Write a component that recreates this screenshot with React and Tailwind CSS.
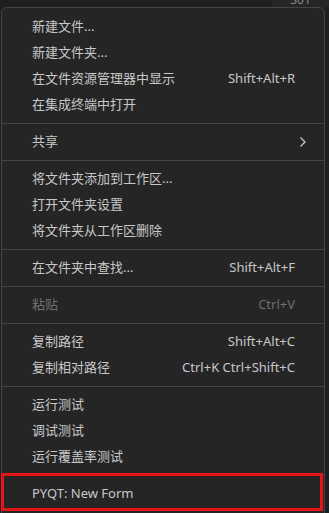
const groups = [
  [
    { label: "新建文件..." },
    { label: "新建文件夹..." },
    { label: "在文件资源管理器中显示", keys: "Shift+Alt+R" },
    { label: "在集成终端中打开" },
  ],
  [{ label: "共享", submenu: true }],
  [
    { label: "将文件夹添加到工作区..." },
    { label: "打开文件夹设置" },
    { label: "将文件夹从工作区删除" },
  ],
  [{ label: "在文件夹中查找...", keys: "Shift+Alt+F" }],
  [{ label: "粘贴", keys: "Ctrl+V", disabled: true }],
  [
    { label: "复制路径", keys: "Shift+Alt+C" },
    { label: "复制相对路径", keys: "Ctrl+K Ctrl+Shift+C" },
  ],
  [
    { label: "运行测试" },
    { label: "调试测试" },
    { label: "运行覆盖率测试" },
  ],
  [{ label: "PYQT: New Form" }],
];

function Chevron() {
  return (
    <svg width="8" height="12" viewBox="0 0 8 12" fill="none">
      <path d="M1.5 1.5 L6 6 L1.5 10.5" stroke="#c8c8c8" strokeWidth="1.3" />
    </svg>
  );
}

function Row({ item }) {
  const color = item.disabled ? "text-[#6f6f6f]" : "text-[#c8c8c8]";
  return (
    <div className={`flex h-[26px] items-center justify-between pl-[30px] ${item.submenu ? "pr-[17px]" : "pr-[29px]"} ${color}`}>
      <span>{item.label}</span>
      {item.keys && <span>{item.keys}</span>}
      {item.submenu && <Chevron />}
    </div>
  );
}

export default function App() {
  return (
    <div
      className="relative h-[513px] w-[329px] overflow-hidden bg-[#1f1f1f] text-[13px]"
      style={{ fontFamily: '"Noto Sans", "Noto Sans CJK SC", sans-serif' }}
    >
      <div className="ml-[272px] flex h-[8px] justify-center overflow-hidden bg-[#262626]">
        <span className="-mt-[9px] text-[12px] text-[#8a8a8a]">301</span>
      </div>

      <div className="absolute left-[1px] top-[7px] w-[324px] rounded-[6px] border border-[#454545] bg-[#252526] pt-[6px] pb-[20px]">
        {groups.map((g, i) => (
          <div key={i}>
            {i > 0 && <div className="my-[5px] h-px bg-[#454545]" />}
            {g.map((item) => (
              <Row key={item.label} item={item} />
            ))}
          </div>
        ))}
      </div>

      <div className="absolute left-[1px] top-[473px] h-[38px] w-[322px] border-[3px] border-[#e8141c]" />
    </div>
  );
}
